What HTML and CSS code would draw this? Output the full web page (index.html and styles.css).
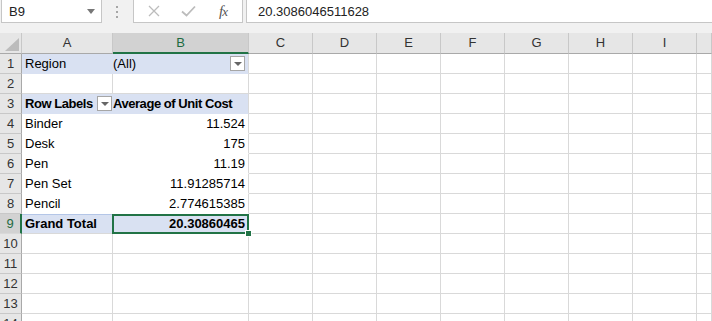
FILE: index.html
```html
<!DOCTYPE html>
<html lang="en">
<head>
    <meta charset="UTF-8">
    <title>Book1 - Pivot</title>
    <link rel="stylesheet" href="styles.css">
</head>
<body>
    <!-- Formula bar -->
    <div class="topbar">
        <div class="namebox">
            <span>B9</span>
            <svg class="caret" width="8" height="5" viewBox="0 0 8 5"><path d="M0 0h8L4 5z" fill="#777"/></svg>
        </div>
        <div class="grip">
            <svg width="3" height="12" viewBox="0 0 3 12"><rect x="0" y="0" width="2" height="2" fill="#a6a6a6"/><rect x="0" y="5" width="2" height="2" fill="#a6a6a6"/><rect x="0" y="10" width="2" height="2" fill="#a6a6a6"/></svg>
        </div>
        <div class="fxbox">
            <svg width="12" height="12" viewBox="0 0 12 12"><path d="M1 1l10 10M11 1L1 11" stroke="#bcbcbc" stroke-width="1.3" fill="none"/></svg>
            <svg width="15" height="12" viewBox="0 0 15 12"><path d="M1 6.5l4.5 4L14 1.5" stroke="#bcbcbc" stroke-width="1.8" fill="none"/></svg>
            <span class="fx">f<i>x</i></span>
        </div>
        <div class="formula">20.3086046511628</div>
    </div>

    <!-- Grid -->
    <table class="sheet">
        <colgroup>
            <col class="c-hd"><col class="c-a"><col class="c-b">
            <col class="c-n"><col class="c-n"><col class="c-n"><col class="c-n"><col class="c-n"><col class="c-n"><col class="c-n"><col class="c-last">
        </colgroup>
        <tr class="colhead">
            <th class="corner"><svg width="14" height="13" viewBox="0 0 14 13"><path d="M14 0v13H0z" fill="#bcbcbc"/></svg></th>
            <th>A</th><th class="sel">B</th><th>C</th><th>D</th><th>E</th><th>F</th><th>G</th><th>H</th><th>I</th><th></th>
        </tr>
        <tr>
            <td class="rh">1</td>
            <td class="pv blue a">Region</td>
            <td class="pv blue b"><div class="withbtn"><span>(All)</span><span class="dd"></span></div></td>
            <td></td><td></td><td></td><td></td><td></td><td></td><td></td><td></td>
        </tr>
        <tr>
            <td class="rh">2</td>
            <td></td><td></td><td></td><td></td><td></td><td></td><td></td><td></td><td></td><td></td>
        </tr>
        <tr>
            <td class="rh">3</td>
            <td class="pv blue a bold"><div class="withbtn"><span class="tight">Row Labels</span><span class="dd"></span></div></td>
            <td class="pv blue b bold tight">Average of Unit Cost</td>
            <td></td><td></td><td></td><td></td><td></td><td></td><td></td><td></td>
        </tr>
        <tr>
            <td class="rh">4</td>
            <td class="pv a">Binder</td><td class="pv b num">11.524</td>
            <td></td><td></td><td></td><td></td><td></td><td></td><td></td><td></td>
        </tr>
        <tr>
            <td class="rh">5</td>
            <td class="pv a">Desk</td><td class="pv b num">175</td>
            <td></td><td></td><td></td><td></td><td></td><td></td><td></td><td></td>
        </tr>
        <tr>
            <td class="rh">6</td>
            <td class="pv a">Pen</td><td class="pv b num">11.19</td>
            <td></td><td></td><td></td><td></td><td></td><td></td><td></td><td></td>
        </tr>
        <tr>
            <td class="rh">7</td>
            <td class="pv a">Pen Set</td><td class="pv b num">11.91285714</td>
            <td></td><td></td><td></td><td></td><td></td><td></td><td></td><td></td>
        </tr>
        <tr>
            <td class="rh">8</td>
            <td class="pv a">Pencil</td><td class="pv b num">2.774615385</td>
            <td></td><td></td><td></td><td></td><td></td><td></td><td></td><td></td>
        </tr>
        <tr class="total">
            <td class="rh sel">9</td>
            <td class="pv blue a bold">Grand Total</td>
            <td class="pv blue b bold num active">20.30860465</td>
            <td></td><td></td><td></td><td></td><td></td><td></td><td></td><td></td>
        </tr>
        <tr><td class="rh">10</td><td></td><td></td><td></td><td></td><td></td><td></td><td></td><td></td><td></td><td></td></tr>
        <tr><td class="rh">11</td><td></td><td></td><td></td><td></td><td></td><td></td><td></td><td></td><td></td><td></td></tr>
        <tr><td class="rh">12</td><td></td><td></td><td></td><td></td><td></td><td></td><td></td><td></td><td></td><td></td></tr>
        <tr><td class="rh">13</td><td></td><td></td><td></td><td></td><td></td><td></td><td></td><td></td><td></td><td></td></tr>
        <tr><td class="rh">14</td><td></td><td></td><td></td><td></td><td></td><td></td><td></td><td></td><td></td><td></td></tr>
    </table>
</body>
</html>
```

FILE: styles.css
```css
/* General */
body {
    margin: 0;
    width: 712px;
    height: 321px;
    overflow: hidden;
    background: #fff;
    font-family: 'Liberation Sans', Arial, sans-serif;
    font-size: 13px;
    color: #000;
}

/* Formula bar */
.topbar {
    display: flex;
    align-items: flex-start;
    height: 33px;
    background: #f1f1f1;
    padding-left: 1px;
    box-sizing: border-box;
}
.namebox {
    width: 101px;
    height: 23px;
    box-sizing: border-box;
    background: #fff;
    border: 1px solid #c6c6c6;
    border-top: none;
    display: flex;
    align-items: center;
    justify-content: space-between;
    padding: 0 6px 0 7px;
    color: #222;
}
.grip {
    width: 31px;
    height: 23px;
    display: flex;
    align-items: center;
    justify-content: center;
}
.fxbox {
    width: 110px;
    height: 23px;
    box-sizing: border-box;
    background: #fff;
    border: 1px solid #c6c6c6;
    border-top: none;
    display: flex;
    align-items: center;
    padding: 0 10px 0 14px;
    gap: 21px;
}
.fx {
    font-family: 'Liberation Serif', serif;
    font-style: italic;
    font-size: 15px;
    color: #555;
    letter-spacing: -1px;
    margin-left: 2px;
}
.fx i {
    font-size: 13px;
}
.formula {
    flex: 1;
    height: 23px;
    margin-left: 3px;
    box-sizing: border-box;
    background: #fff;
    border-left: 1px solid #c6c6c6;
    border-bottom: 1px solid #c6c6c6;
    padding-left: 11px;
    line-height: 23px;
    color: #222;
}

/* Sheet grid */
.sheet {
    table-layout: fixed;
    border-collapse: separate;
    border-spacing: 0;
    width: 712px;
}
.c-hd { width: 22px; }
.c-a { width: 91px; }
.c-b { width: 136px; }
.c-n { width: 64px; }
.c-last { width: 15px; }

.sheet td, .sheet th {
    height: 20px;
    padding: 0;
    box-sizing: border-box;
    border-right: 1px solid #d9d9d9;
    border-bottom: 1px solid #d9d9d9;
    white-space: nowrap;
    overflow: hidden;
    vertical-align: bottom;
    line-height: 18px;
}

.colhead th {
    height: 21px;
    background: #e6e6e6;
    font-weight: normal;
    color: #333;
    border-right: 1px solid #c8c8c8;
    border-bottom: 1px solid #a9a9a9;
    text-align: center;
    vertical-align: middle;
}
.colhead th.corner {
    text-align: right;
    vertical-align: bottom;
    padding: 0 2px 2px 0;
}
.colhead th.corner svg { display: block; margin-left: auto; }
.colhead th.sel {
    background: #d2d2d2;
    color: #1e6b41;
    border-bottom: 2px solid #217346;
}

.rh {
    background: #e6e6e6;
    color: #333;
    text-align: center;
    border-right: 1px solid #a9a9a9 !important;
    border-bottom-color: #c8c8c8 !important;
}
.rh.sel {
    background: #d2d2d2;
    color: #1e6b41;
    border-right: 2px solid #217346 !important;
}

/* Pivot table cells */
.pv { border-bottom-color: #fff !important; }
.pv.a { padding-left: 3px; border-right-color: #fff; }
.pv.b { padding-right: 3px; }
.pv.blue { background: #d9e1f2; border-bottom-color: #d9e1f2 !important; }
.pv.blue.a { border-right-color: #d9e1f2; }
.num { text-align: right; }
.bold { font-weight: bold; }
.tight { letter-spacing: -0.45px; }

.total td.pv { border-top: 1px solid #b4c6e7; }
.total td { border-bottom-color: #d9d9d9 !important; }
.total .pv.blue { border-bottom-color: #d9d9d9 !important; }

.withbtn {
    display: flex;
    align-items: center;
    justify-content: space-between;
}
.dd {
    width: 15px;
    height: 15px;
    box-sizing: border-box;
    background: #fff;
    border: 1px solid #a6a6a6;
    position: relative;
    flex-shrink: 0;
    margin-bottom: 1px;
}
.dd::after {
    content: "";
    position: absolute;
    left: 3px;
    top: 5px;
    border-left: 4px solid transparent;
    border-right: 4px solid transparent;
    border-top: 4px solid #666;
}

/* Active cell outline */
.active {
    position: relative;
    overflow: visible !important;
}
.active::before {
    content: "";
    position: absolute;
    left: -1px;
    top: -1px;
    right: -1px;
    bottom: -1px;
    border: 2px solid #217346;
}
.active::after {
    content: "";
    position: absolute;
    right: -4px;
    bottom: -4px;
    width: 5px;
    height: 5px;
    background: #217346;
    border: 1px solid #fff;
}
```
